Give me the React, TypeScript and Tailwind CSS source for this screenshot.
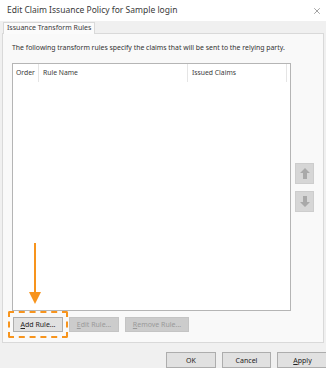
import { X } from "lucide-react";

const font = { fontFamily: '"Noto Sans", "Open Sans", sans-serif' };

function WinButton({ label, accel, disabled = false, w }: { label: string; accel: string; disabled?: boolean; w: string }) {
  const rest = label.slice(1);
  return (
    <button
      type="button"
      disabled={disabled}
      className={`${w} h-[15px] flex items-center justify-center text-[7px] leading-none border ${
        disabled ? "bg-[#cccccc] border-[#c4c4c4] text-[#9a9a9a]" : "bg-[#e1e1e1] border-[#adadad] text-[#222]"
      }`}
    >
      <span>
        <span className="underline">{accel}</span>
        {rest}
      </span>
    </button>
  );
}

// block arrow used by the disabled move up / move down buttons
function BlockArrow({ down = false }: { down?: boolean }) {
  return (
    <svg width="10" height="11" viewBox="0 0 10 11" className={down ? "rotate-180" : ""}>
      <polygon points="5,0 10,5 7,5 7,11 3,11 3,5 0,5" fill="#a9a9a9" />
    </svg>
  );
}

export default function App() {
  return (
    <div className="relative w-[326px] h-[368px] overflow-hidden bg-[#f0f0f0] text-[#333]" style={font}>
      {/* title bar */}
      <div className="h-[21px] bg-white flex items-center justify-between pl-[7px] pr-[4px]">
        <span className="text-[8.5px] text-[#3a3a3a]">Edit Claim Issuance Policy for Sample login</span>
        <X className="w-[10px] h-[10px] text-[#555]" strokeWidth={1.3} />
      </div>

      {/* tab strip */}
      <div className="px-[2px] pt-[1px]">
        <div className="ml-[1px] w-[92px] h-[12px] bg-[#fbfbfb] border border-b-0 border-[#d9d9d9] flex items-center pl-[3px] text-[7px] text-[#3a3a3a] relative z-10 -mb-px">
          Issuance Transform Rules
        </div>

        {/* tab page */}
        <div className="w-[322px] h-[310px] bg-[#f9f9f9] border border-[#d9d9d9] flex flex-col px-[9px]">
          <div className="pt-[9px] h-[29px] text-[6.9px] text-[#333]">
            The following transform rules specify the claims that will be sent to the relying party.
          </div>

          <div className="flex gap-[4px]">
            {/* list view */}
            <div className="w-[282px] h-[248px] bg-white border border-[#b5b5b5] flex flex-col">
              <div className="h-[18px] flex items-center text-[6.8px] text-[#3a3a3a]">
                <div className="w-[26px] pl-[3px] border-r border-[#e5e5e5] h-full flex items-center">Order</div>
                <div className="w-[149px] pl-[4px] border-r border-[#e5e5e5] h-full flex items-center">Rule Name</div>
                <div className="w-[99px] pl-[4px] border-r border-[#e5e5e5] h-full flex items-center">Issued Claims</div>
              </div>
            </div>

            {/* move buttons */}
            <div className="flex flex-col gap-[7px] pt-[100px]">
              <div className="w-[19px] h-[21px] bg-[#d6d6d6] border border-[#cdcdcd] flex items-center justify-center">
                <BlockArrow />
              </div>
              <div className="w-[19px] h-[21px] bg-[#d6d6d6] border border-[#cdcdcd] flex items-center justify-center">
                <BlockArrow down />
              </div>
            </div>
          </div>

          <div className="flex gap-[6px] mt-[6px] pl-[1px]">
            <WinButton label="Add Rule..." accel="A" w="w-[50px]" />
            <WinButton label="Edit Rule..." accel="E" w="w-[50px]" disabled />
            <WinButton label="Remove Rule..." accel="R" w="w-[64px]" disabled />
          </div>
        </div>
      </div>

      {/* dialog buttons */}
      <div className="flex justify-end gap-[6px] pt-[9px] -mr-[2px]">
        <button type="button" className="w-[50px] h-[16px] bg-[#e1e1e1] border border-[#adadad] text-[7px] leading-none text-[#222]">OK</button>
        <button type="button" className="w-[49px] h-[16px] bg-[#e1e1e1] border border-[#adadad] text-[7px] leading-none text-[#222]">Cancel</button>
        <button type="button" className="w-[51px] h-[16px] bg-[#e1e1e1] border border-[#adadad] text-[7px] leading-none text-[#222]">
          <span className="underline">A</span>pply
        </button>
      </div>

      {/* orange callout */}
      <div className="absolute left-[34px] top-[243px] w-[2px] h-[52px] bg-[#f7941d]" />
      <svg className="absolute left-[29px] top-[292px]" width="12" height="12" viewBox="0 0 12 12">
        <polygon points="0,0 12,0 6,12" fill="#f7941d" />
      </svg>
      <div className="absolute left-[8px] top-[311px] w-[60px] h-[27px] border-2 border-dashed border-[#f7941d] rounded-[2px]" />
    </div>
  );
}
